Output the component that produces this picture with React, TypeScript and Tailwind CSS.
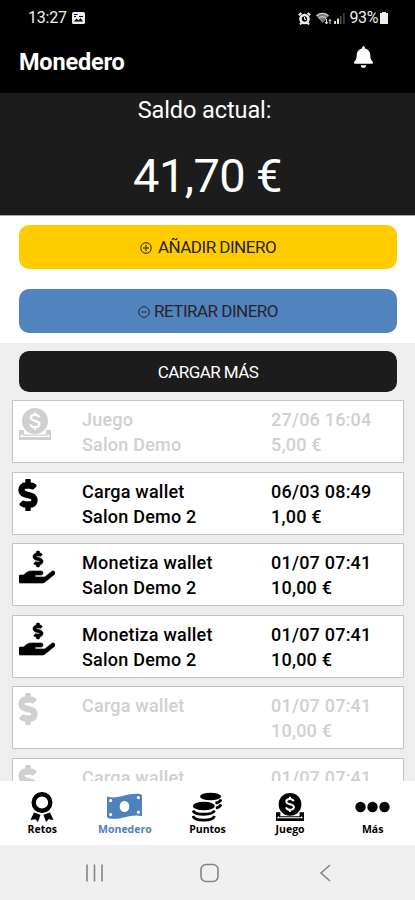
import React from "react";
import { FaBell, FaDollarSign, FaHandHoldingUsd } from "react-icons/fa";

type IconName = "juego" | "carga" | "monetiza";

interface Movement {
    id: number;
    icon: IconName;
    title: string;
    place: string;
    date: string;
    amount: string;
    disabled: boolean;
}

const movements: Movement[] = [
    { id: 1, icon: "juego", title: "Juego", place: "Salon Demo", date: "27/06 16:04", amount: "5,00 €", disabled: true },
    { id: 2, icon: "carga", title: "Carga wallet", place: "Salon Demo 2", date: "06/03 08:49", amount: "1,00 €", disabled: false },
    { id: 3, icon: "monetiza", title: "Monetiza wallet", place: "Salon Demo 2", date: "01/07 07:41", amount: "10,00 €", disabled: false },
    { id: 4, icon: "monetiza", title: "Monetiza wallet", place: "Salon Demo 2", date: "01/07 07:41", amount: "10,00 €", disabled: false },
    { id: 5, icon: "carga", title: "Carga wallet", place: "", date: "01/07 07:41", amount: "10,00 €", disabled: true },
    { id: 6, icon: "carga", title: "Carga wallet", place: "", date: "01/07 07:41", amount: "10,00 €", disabled: true },
];

const CoinSlotIcon: React.FC<{ className?: string }> = ({ className }) => (
    <svg viewBox="0 0 32 32" className={className} fill="none">
        <circle cx="16" cy="13" r="13" fill="currentColor" />
        <path
            d="M20.3 9.2C19.6 7.6 18 6.8 16 6.8c-2.5 0-4.3 1.2-4.3 3 0 4.2 8.7 2 8.7 6.3 0 2-1.9 3.1-4.4 3.1-2.3 0-4-1-4.6-2.8M16 4.4v2.8M16 19v2.8"
            stroke="white"
            strokeWidth="2.2"
        />
        <path d="M0 22h5v4.500h22V22h5v10H0z" fill="currentColor" />
        <path d="M3 26.800l-.8 1.500h27.600l-.8-1.500" stroke="white" strokeWidth="1.300" />
    </svg>
);

const RibbonIcon: React.FC = () => (
    <svg viewBox="0 0 24 30" className="h-[30px] w-6">
        <circle cx="12" cy="10.5" r="8.3" fill="none" stroke="black" strokeWidth="4.400" />
        <path d="M4 20.500l6.500 2.300-2.500 7.200-2.700-2.800-4.800.8zM20 20.500l-6.500 2.300 2.500 7.200 2.700-2.800 4.800.8z" fill="black" />
    </svg>
);

const BanknoteIcon: React.FC = () => (
    <svg viewBox="0 0 37 27" className="h-[27px] w-[37px]">
        <path d="M1 3.5C12 7 22-.8 34.5 1.2q1.5.2 1.5 1.6v20.4C24.500 20 15 28 2.300 25.300Q1 25 1 23.500z" fill="currentColor" />
        <ellipse cx="18.500" cy="13.500" rx="4.800" ry="5.600" fill="white" />
        <g fill="white">
            <circle cx="4.600" cy="7.600" r="1.600" />
            <circle cx="32.400" cy="4.600" r="1.600" />
            <circle cx="4.600" cy="21.600" r="1.600" />
            <circle cx="32.400" cy="19.200" r="1.600" />
        </g>
    </svg>
);

const CoinsIcon: React.FC = () => (
    <svg viewBox="0 0 30 30" className="size-[30px]" fill="none" stroke="currentColor" strokeWidth="2.800">
        <ellipse cx="18.500" cy="4.500" rx="10.500" ry="3.800" fill="currentColor" stroke="none" />
        <path d="M29 7.500c-.6 2-2.300 3-5.500 3.700M29 12.500c-.6 2-2.300 3-5 3.700" />
        <ellipse cx="11.800" cy="14" rx="11" ry="4.300" fill="currentColor" stroke="none" />
        <path d="M1 18.500c2 5 19.500 5 21.500 0M1 24c2 5.500 19.500 5.500 21.500 0" />
    </svg>
);

const MovementIcon: React.FC<{ name: IconName }> = ({ name }) => {
    switch (name) {
        case "juego":
            return <CoinSlotIcon className="mt-[7px] size-8" />;
        case "carga":
            return <FaDollarSign className="mt-1.5 -ml-[7px] size-8" stroke="currentColor" strokeWidth="22" />;
        case "monetiza":
            return <FaHandHoldingUsd className="mt-[5px] size-9" stroke="currentColor" strokeWidth="10" />;
    }
};

const MovementCard: React.FC<{ movement: Movement }> = ({ movement }) => (
    <div
        className={`flex h-[63px] shrink-0 border border-[#c4c4c4] bg-white pl-1.5 text-[18px] leading-[25px] font-medium tracking-[0.22px] ${
            movement.disabled ? "text-[#d0d0d0]" : "text-black"
        }`}
    >
        <div className="w-[63px]">
            <MovementIcon name={movement.icon} />
        </div>
        <div className="w-[189px] pt-1.5">
            <div>{movement.title}</div>
            <div>{movement.place}</div>
        </div>
        <div className="pt-1.5">
            <div>{movement.date}</div>
            <div>{movement.amount}</div>
        </div>
    </div>
);

const StatusBar: React.FC = () => (
    <div className="flex h-9 items-center justify-between pr-[27px] pl-7 text-[16px] text-[#eeeeee]">
        <div className="flex items-center gap-[5px]">
            <span className="tracking-[-0.2px]">13:27</span>
            <svg viewBox="0 0 13 12" className="h-3 w-[13px]">
                <rect width="13" height="12" rx="1.500" fill="#eee" />
                <path d="M2 9.500l2.500-3 2 2 2-2.500 2.500 3.500z" fill="black" />
                <path d="M2 2.500h3.500M2 4.500h2M7 4.500h4" stroke="black" strokeWidth="1" />
            </svg>
        </div>
        <div className="flex items-center">
            <svg viewBox="0 0 13 13" className="mr-[5px] size-[13px]" fill="none" stroke="#eee">
                <circle cx="6.500" cy="7" r="4" strokeWidth="2.600" />
                <path d="M.8 3.200L3.400 1M12.200 3.200L9.600 1M2 12.500l1.600-1.800M11 12.500l-1.600-1.800" strokeWidth="2" />
                <path d="M6.500 5v2.400H8" strokeWidth="1" />
            </svg>
            <svg viewBox="0 0 16 13" className="mr-0.5 h-[13px] w-4">
                <path d="M0 3.500Q6.500-1.800 13 3.500L8.500 9 6.500 11z" fill="#777" />
                <path d="M.5 3.700Q6.500-1 12.500 3.700M2.800 6.200Q6.500 3.200 10 6.200" fill="none" stroke="#ccc" strokeWidth="1.200" />
                <path d="M10.500 7v5M9 10l1.500 2 1.500-2M14 12V7.500M12.800 9L14 7.500 15.200 9" fill="none" stroke="#ddd" strokeWidth="1" />
            </svg>
            <svg viewBox="0 0 11 12" className="mr-1 h-3 w-[11px]">
                <path d="M0 12V9h2v3zM3 12V6.500h2V12z" fill="#ddd" />
                <path d="M6 12V4h1.500v8zM9.300 12V1h1.200v11z" fill="#555" />
            </svg>
            <span className="tracking-[-0.4px]">93%</span>
            <svg viewBox="0 0 8 12" className="ml-0.5 h-3 w-2">
                <path d="M2 0h4v1h2v11H0V1h2z" fill="#eee" />
            </svg>
        </div>
    </div>
);

const tabs = [
    { label: "Retos", icon: <RibbonIcon /> },
    { label: "Monedero", icon: <BanknoteIcon />, active: true },
    { label: "Puntos", icon: <CoinsIcon /> },
    { label: "Juego", icon: <CoinSlotIcon className="size-7" /> },
    {
        label: "Más",
        icon: (
            <svg viewBox="0 0 35 12" className="h-3 w-[35px]">
                <circle cx="5.500" cy="6" r="5.200" />
                <circle cx="17.500" cy="6" r="5.200" />
                <circle cx="29.500" cy="6" r="5.200" />
            </svg>
        ),
    },
];

const TabBar: React.FC = () => (
    <nav className="grid h-16 shrink-0 grid-cols-5 bg-white px-px pt-2.5">
        {tabs.map((tab) => (
            <div key={tab.label} className={`flex flex-col items-center ${tab.active ? "text-[#4f81bd]" : "text-black"}`}>
                <div className="flex h-[31px] items-center">{tab.icon}</div>
                <span className="text-[10.5px] leading-[15px] font-bold font-['Open_Sans',sans-serif]">{tab.label}</span>
            </div>
        ))}
    </nav>
);

const App: React.FC = () => {
    return (
        <div className="flex h-[900px] w-[415px] flex-col overflow-hidden bg-[#eeeeee] font-[Roboto,sans-serif]">
            <header className="h-[93px] shrink-0 bg-black text-white">
                <StatusBar />
                <div className="flex items-start justify-between pr-[42px] pl-[19px]">
                    <h1 className="pt-3 text-[23.5px] leading-7 font-bold tracking-[-0.2px]">Monedero</h1>
                    <FaBell className="mt-2.5 h-[22px] w-[19px]" />
                </div>
            </header>

            <section className="flex h-[122px] shrink-0 flex-col items-center bg-[#1c1c1c] text-white">
                <div className="mt-0.5 mr-1.5 text-[23.5px] leading-[30px] tracking-[-0.1px]">Saldo actual:</div>
                <div className="mt-[23px] text-[47px] leading-[56px] tracking-[-0.6px]">41,70 €</div>
            </section>

            <section className="flex h-32 shrink-0 flex-col gap-5 border-t border-[#aaaaaa] bg-white pt-[9px] pr-[18px] pl-[19px] text-[17px] tracking-[-0.5px] text-[#262626]">
                <button className="flex h-11 shrink-0 items-center justify-center gap-1.5 rounded-[10px] bg-[#ffcc00] pt-0.5">
                    <svg viewBox="0 0 12 12" className="size-3" fill="none" stroke="currentColor">
                        <circle cx="6" cy="6" r="5.300" />
                        <path d="M6 3v6M3 6h6" />
                    </svg>
                    AÑADIR DINERO
                </button>
                <button className="flex h-11 shrink-0 items-center justify-center gap-1 rounded-[10px] bg-[#5183be] pt-0.5">
                    <svg viewBox="0 0 12 12" className="size-3" fill="none" stroke="currentColor">
                        <circle cx="6" cy="6" r="5.300" />
                        <path d="M3.500 6h5" />
                    </svg>
                    RETIRAR DINERO
                </button>
            </section>

            <main className="flex min-h-0 flex-1 flex-col overflow-hidden pt-2 pr-[11px] pl-3">
                <button className="mr-[7px] mb-2 ml-[7px] h-[41px] shrink-0 rounded-[10px] bg-[#1c1c1c] pt-0.5 text-[17px] tracking-[-0.55px] text-white">
                    CARGAR MÁS
                </button>
                <div className="flex flex-col gap-[8.500px]">
                    {movements.map((movement) => (
                        <MovementCard key={movement.id} movement={movement} />
                    ))}
                </div>
            </main>

            <TabBar />

            <div className="flex h-[55px] shrink-0 items-center justify-center bg-[#f0f0f0] pr-0.5">
                <svg viewBox="0 0 250 20" className="h-5 w-[250px]" fill="none" stroke="#858585" strokeWidth="1.600">
                    <path d="M5 1.500v17M12.500 1.500v17M20 1.500v17" />
                    <rect x="119" y="1.500" width="17" height="17" rx="5" />
                    <path d="M248 2l-9 8 9 8" />
                </svg>
            </div>
        </div>
    );
};

export default App;
